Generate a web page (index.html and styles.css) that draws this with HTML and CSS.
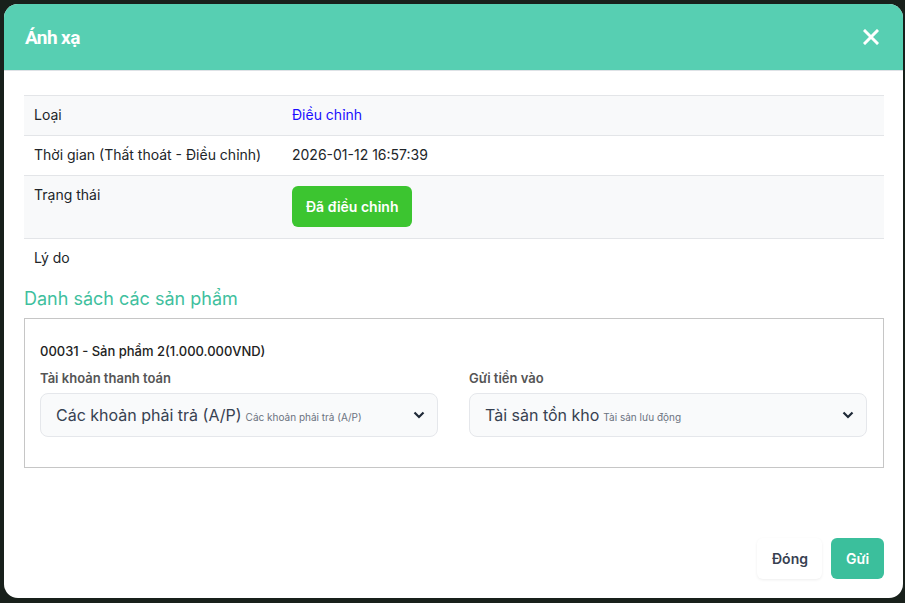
FILE: index.html
```html
<html lang="vi">
<head>
    <meta charset="UTF-8">
    <meta name="viewport" content="width=device-width, initial-scale=1.0">
    <title>Ánh xạ</title>
    <link rel="stylesheet" href="styles.css">
</head>
<body>
    <div class="modal">
        <header class="modal-header">
            <h2 class="modal-title">Ánh xạ</h2>
            <button class="btn-close" aria-label="close">
                <svg width="16" height="16" viewBox="0 0 16 16"><path d="M2 2 L14 14 M14 2 L2 14" stroke="#fff" stroke-width="3" stroke-linecap="square"/></svg>
            </button>
        </header>

        <div class="modal-body">
            <table class="info">
                <colgroup>
                    <col class="col-label">
                    <col>
                </colgroup>
                <tr class="odd">
                    <td>Loại</td>
                    <td class="link">Điều chỉnh</td>
                </tr>
                <tr>
                    <td>Thời gian (Thất thoát - Điều chỉnh)</td>
                    <td>2026-01-12 16:57:39</td>
                </tr>
                <tr class="odd">
                    <td>Trạng thái</td>
                    <td><span class="badge">Đã điều chỉnh</span></td>
                </tr>
                <tr class="last">
                    <td>Lý do</td>
                    <td></td>
                </tr>
            </table>

            <h3 class="section-title">Danh sách các sản phẩm</h3>

            <div class="product">
                <div class="product-name">00031 - Sản phẩm 2(1.000.000VND)</div>
                <div class="fields">
                    <div class="field">
                        <label>Tài khoản thanh toán</label>
                        <div class="select">
                            <span class="main">Các khoản phải trả (A/P)</span>
                            <span class="sub">Các khoản phải trả (A/P)</span>
                            <svg class="chev" width="12" height="8" viewBox="0 0 12 8"><path d="M1.5 1.5 L6 6 L10.5 1.5" fill="none" stroke="#1f2937" stroke-width="2.2"/></svg>
                        </div>
                    </div>
                    <div class="field">
                        <label>Gửi tiền vào</label>
                        <div class="select">
                            <span class="main">Tài sản tồn kho</span>
                            <span class="sub">Tài sản lưu động</span>
                            <svg class="chev" width="12" height="8" viewBox="0 0 12 8"><path d="M1.5 1.5 L6 6 L10.5 1.5" fill="none" stroke="#1f2937" stroke-width="2.2"/></svg>
                        </div>
                    </div>
                </div>
            </div>
        </div>

        <footer class="modal-footer">
            <button class="btn btn-light">Đóng</button>
            <button class="btn btn-primary">Gửi</button>
        </footer>
    </div>
</body>
</html>
```

FILE: styles.css
```css
html,
body {
  height: 100%;
}

body {
  margin: 0;
  padding: 4px 0 0 4px;
  box-sizing: border-box;
  background-color: #18201b;
  font-family: Inter, "Noto Sans", sans-serif;
  color: #212529;
}

.modal {
  width: 899px;
  height: 594px;
  background: #fff;
  border-radius: 14px;
  overflow: hidden;
  display: flex;
  flex-direction: column;
}

.modal-header {
  height: 66px;
  background: #57cfb2;
  border-bottom: 1px solid #dee2e6;
  display: flex;
  align-items: center;
  justify-content: space-between;
  padding: 0 24px 0 21px;
  flex-shrink: 0;
}

.modal-title {
  margin: 0;
  color: #fff;
  font-family: Roboto, sans-serif;
  font-size: 19px;
  font-weight: 700;
  letter-spacing: -0.6px;
}

.btn-close {
  background: none;
  border: 0;
  padding: 0;
  width: 16px;
  height: 16px;
  display: flex;
}

.modal-body {
  flex: 1;
  padding: 24px 19px 0 20px;
}

.info {
  width: 100%;
  table-layout: fixed;
  border-collapse: collapse;
  font-size: 14px;
  line-height: 20px;
  border-top: 1px solid #e3e5e8;
}

.info .col-label {
  width: 258px;
}

.info td {
  padding: 9px 10px 10px;
  vertical-align: top;
  border-bottom: 1px solid #e3e5e8;
}

.info tr.last td {
  border-bottom: 0;
}

.info tr.odd td {
  background: #f8f9fa;
}

.info td.link {
  color: #1a0dff;
}

.badge {
  display: inline-block;
  margin: 1px 0 1px;
  padding: 11px 14px 10px 14px;
  background: #3cc530;
  color: #fff;
  font-weight: 600;
  border-radius: 6px;
}

.section-title {
  margin: 10px 0 9px;
  font-size: 18px;
  font-weight: 400;
  color: #3fbf9e;
}

.product {
  border: 1px solid #c6c6c6;
  padding: 22px 16px 30px 15px;
}

.product-name {
  font-size: 13px;
  font-weight: 500;
  line-height: 20px;
  color: #222;
}

.fields {
  display: grid;
  grid-template-columns: 1fr 1fr;
  gap: 31px;
  margin-top: 7px;
}

.field label {
  display: block;
  font-size: 13px;
  font-weight: 600;
  color: #555;
  line-height: 20px;
  margin-bottom: 5px;
}

.select {
  height: 42px;
  border: 1px solid #e5e7eb;
  border-radius: 8px;
  background: #f9fafb;
  display: flex;
  align-items: center;
  padding: 0 12px 0 15px;
  gap: 4px;
}

.select .main {
  font-size: 16px;
  color: #374151;
}

.select .sub {
  font-size: 10px;
  color: #6b7280;
  margin-top: 3px;
}

.select .chev {
  margin-left: auto;
}

.modal-footer {
  display: flex;
  justify-content: flex-end;
  gap: 9px;
  padding: 0 19px 19px 0;
}

.btn {
  font-family: Inter, sans-serif;
  font-size: 14px;
  font-weight: 600;
  height: 41px;
  border-radius: 6px;
  border: 0;
  padding: 0 15px;
}

.btn-light {
  width: 65px;
  background: #fff;
  color: #374151;
  box-shadow: 0 1px 3px rgba(0, 0, 0, 0.07);
}

.btn-primary {
  width: 53px;
  background: #3bbf9c;
  color: #fff;
}
```
